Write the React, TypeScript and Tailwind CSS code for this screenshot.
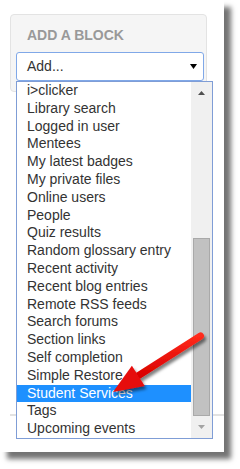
const blocks = [
  "i>clicker",
  "Library search",
  "Logged in user",
  "Mentees",
  "My latest badges",
  "My private files",
  "Online users",
  "People",
  "Quiz results",
  "Random glossary entry",
  "Recent activity",
  "Recent blog entries",
  "Remote RSS feeds",
  "Search forums",
  "Section links",
  "Self completion",
  "Simple Restore",
  "Student Services",
  "Tags",
  "Upcoming events",
];

const selected = "Student Services";

export default function App() {
  return (
    <div className="w-[240px] h-[469px] bg-white font-['Liberation_Sans',Arial,sans-serif]">
      <div className="relative w-[224px] h-[452px] bg-white pt-[14px] pl-[10px] shadow-[7px_7px_5px_rgba(0,0,0,0.55)]">
        {/* block panel */}
        <div className="w-[197px] rounded-[4px] border border-[#e3e3e3] bg-[#f5f5f5] pt-[10px] pb-[10px] pl-[5px]">
          <h2 className="pl-[11px] text-[14px] leading-[20px] font-bold text-[#999999]">ADD A BLOCK</h2>
          <div className="mt-[7px] flex h-[29px] w-[188px] items-center justify-between rounded-[3px] border border-[#80a8e8] bg-white pl-[10px] pr-[6px] text-[14px] text-[#333333]">
            <span>Add...</span>
            <svg width="7" height="5" viewBox="0 0 7 5">
              <path d="M0 0H7L3.5 5Z" fill="#000" />
            </svg>
          </div>
        </div>
        <div className="mt-[322px] border-t-2 border-[#e2e2e2]" />

        {/* open dropdown */}
        <div className="absolute left-[16px] top-[81px] flex h-[358px] w-[197px] border border-[#7f9dd6] bg-white">
          <ul className="flex-1 text-[14px] text-[#333333]">
            {blocks.map((b) => (
              <li
                key={b}
                className={
                  b === selected
                    ? "h-[17.8px] leading-[17.8px] pl-[10px] whitespace-nowrap bg-[#1e90ff] text-white"
                    : "h-[17.8px] leading-[17.8px] pl-[10px] whitespace-nowrap"
                }
              >
                {b}
              </li>
            ))}
          </ul>
          <div className="flex w-[21px] flex-col bg-[#f0f0f0]">
            <div className="flex h-[22px] items-center justify-center">
              <svg width="7" height="4" viewBox="0 0 7 4">
                <path d="M3.5 0L7 4H0Z" fill="#505050" />
              </svg>
            </div>
            <div className="flex-1">
              <div className="mx-[2px] mt-[134px] h-[178px] border border-[#a9a9a9] bg-[#c1c1c1]" />
            </div>
            <div className="flex h-[22px] items-center justify-center">
              <svg width="7" height="4" viewBox="0 0 7 4">
                <path d="M0 0H7L3.5 4Z" fill="#a3a3a3" />
              </svg>
            </div>
          </div>
        </div>

        {/* red callout arrow */}
        <svg className="pointer-events-none absolute left-0 top-0" width="224" height="452" viewBox="0 0 224 452">
          <defs>
            <filter id="sh" x="-20%" y="-20%" width="140%" height="140%">
              <feDropShadow dx="2" dy="3" stdDeviation="1.5" floodColor="#000" floodOpacity="0.5" />
            </filter>
            <linearGradient id="rd" x1="0" y1="0" x2="0" y2="1">
              <stop offset="0" stopColor="#ff2a1a" />
              <stop offset="1" stopColor="#d80000" />
            </linearGradient>
          </defs>
          <g filter="url(#sh)">
            <line x1="137" y1="376.5" x2="200.5" y2="336" stroke="url(#rd)" strokeWidth="7" strokeLinecap="round" />
            <polygon points="113,392 144.7,386 131.9,365.8" fill="#e60a0a" />
          </g>
        </svg>
      </div>
    </div>
  );
}
